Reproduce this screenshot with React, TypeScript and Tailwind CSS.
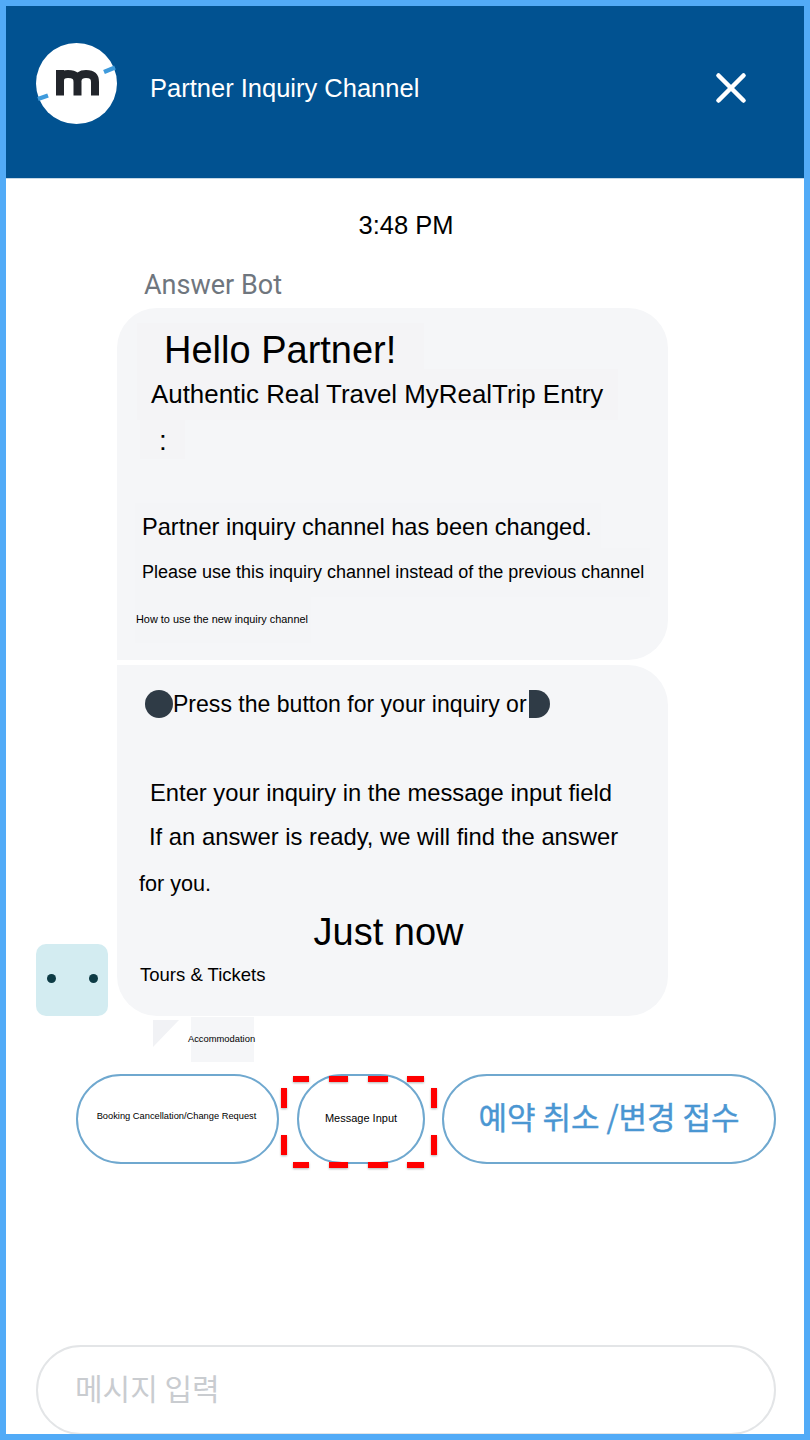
import { X } from 'lucide-react';

// dashes of the red highlight box, coordinates are local to its svg
const dashes = [
  [17, 7, 33, 7], [53, 7, 72, 7], [92, 7, 112, 7], [131, 7, 148, 7],
  [17, 93, 33, 93], [53, 93, 72, 93], [92, 93, 112, 93], [131, 93, 148, 93],
  [8, 16, 8, 36], [8, 63, 8, 83],
  [158, 16, 158, 36], [158, 63, 158, 83],
];

const Logo = () => (
  <svg width="81" height="81" viewBox="0 0 81 81" className="shrink-0">
    <circle cx="40.5" cy="40.5" r="40.5" fill="#ffffff" />
    <path d="M2 56 L12 52.5 M68 29 L79 24.5" stroke="#3f9bdc" strokeWidth="4.5" fill="none" />
    <path
      d="M24 52.5 V27 M24 38 C24 33 27 31 32 31 C38.5 31 41.5 33.5 41.5 39 V52.5 M41.5 38 C41.5 33 45 31 50 31 C56 31 59 33.5 59 39 V52.5"
      stroke="#22252b"
      strokeWidth="8"
      fill="none"
    />
  </svg>
);

const App = () => {
  return (
    <div className="w-[810px] h-[1440px] box-border border-[6px] border-[#52abf7] bg-white overflow-hidden font-['Liberation_Sans',sans-serif] text-black">
      <header className="h-[173px] bg-[#015291] border-b border-[#c5d8e6] pl-[30px] pt-[37px] pr-[48px] box-border">
        <div className="h-[90px] flex items-center">
          <div className="self-start">
            <Logo />
          </div>
          <span className="ml-[33px] text-[25.5px] text-white">Partner Inquiry Channel</span>
          <X size={50} strokeWidth={2.2} className="ml-auto text-white" />
        </div>
      </header>

      <div className="h-[93px] pl-[2px] flex items-center justify-center text-[25.5px]">3:48 PM</div>
      <div className="h-[36px] pl-[138px] pb-[10px] flex items-center font-['Roboto',sans-serif] text-[27px] text-[#6f767e]">
        Answer Bot
      </div>

      <div className="flex items-end pl-[30px] gap-[9px]">
        <div className="w-[72px] h-[72px] rounded-[10px] bg-[#d3ecf1] flex items-center justify-between px-[10.5px] pb-[4px] box-border">
          <span className="w-[9px] h-[9px] rounded-full bg-[#0d3b45]" />
          <span className="w-[9px] h-[9px] rounded-full bg-[#0d3b45]" />
        </div>

        <div className="flex flex-col gap-[5px]">
          <div className="w-[551px] h-[352px] box-border pt-[15px] rounded-t-[40px] rounded-br-[40px] bg-[#f5f6f8] flex flex-col items-start">
            <div className="ml-[20px] w-[287px] h-[46px] pl-[27px] pt-[8px] flex items-center bg-[#f4f4f6] text-[38px] whitespace-nowrap">
              Hello Partner!
            </div>
            <div className="ml-[20px] w-[481px] h-[51px] pl-[14px] flex items-center bg-[#f4f4f6] text-[25.9px] whitespace-nowrap">
              Authentic Real Travel MyRealTrip Entry
            </div>
            <div className="ml-[23px] w-[45px] h-[39px] pl-[19px] pt-[2px] flex items-center bg-[#f4f4f6] text-[28px] leading-none">:</div>
            <div className="mt-[44px] ml-[18px] w-[466px] h-[45px] pl-[7px] pt-[4px] flex items-center bg-[#f4f5f7] text-[23.6px] whitespace-nowrap">
              Partner inquiry channel has been changed.
            </div>
            <div className="ml-[18px] w-[515px] h-[49px] pl-[7px] flex items-center bg-[#f4f5f7] text-[18px] whitespace-nowrap">
              Please use this inquiry channel instead of the previous channel
            </div>
            <div className="ml-[18px] w-[176px] h-[46px] pl-px pb-[2px] flex items-center bg-[#f4f5f7] text-[10.9px] whitespace-nowrap">
              How to use the new inquiry channel
            </div>
          </div>

          <div className="w-[551px] h-[351px] box-border rounded-tr-[40px] rounded-b-[40px] bg-[#f5f6f8] flex flex-col items-start">
            <div className="mt-[25px] ml-[28px] h-[28px] flex items-center text-[23.05px] whitespace-nowrap">
              <span className="w-[28px] h-[28px] rounded-full bg-[#2f3b46]" />
              Press the button for your inquiry or
              <span className="ml-[2px] w-[21px] h-[28px] rounded-r-full bg-[#2f3b46]" />
            </div>
            <div className="mt-[61px] ml-[33px] text-[23.75px] leading-[28px] whitespace-nowrap">
              Enter your inquiry in the message input field
            </div>
            <div className="mt-[16px] ml-[32px] text-[23.8px] leading-[28px] whitespace-nowrap">
              If an answer is ready, we will find the answer
            </div>
            <div className="mt-[19px] ml-[22px] text-[21.6px] leading-[28px] whitespace-nowrap">for you.</div>
            <div className="mt-[12px] self-center pr-[8px] text-[38px] leading-[44px] whitespace-nowrap">Just now</div>
            <div className="mt-[9px] ml-[23px] text-[18.5px] leading-[24px] whitespace-nowrap">Tours &amp; Tickets</div>
          </div>
        </div>
      </div>

      <div className="mt-px h-[45px] pl-[147px] flex items-start">
        <div className="mt-[3px] w-[26px] h-[27px] bg-[#f1f2f5] [clip-path:polygon(0_0,100%_0,0_100%)]" />
        <div className="ml-[12px] w-[63px] h-[45px] bg-[#f5f6f8] flex items-center justify-center pr-[2px] text-[9.4px] whitespace-nowrap">
          Accommodation
        </div>
      </div>

      <div className="mt-[12px] pl-[70px] flex items-start">
        <button className="w-[203px] h-[90px] box-border rounded-full border-2 border-[#6fa8cf] bg-white text-[9.3px] whitespace-nowrap flex items-center justify-center pb-[4px] pr-[2px]">
          Booking Cancellation/Change Request
        </button>
        <div className="relative ml-[18px]">
          <button className="w-[128px] h-[90px] box-border rounded-full border-2 border-[#6fa8cf] bg-white text-[11px] whitespace-nowrap flex items-center justify-center pb-[2px]">
            Message Input
          </button>
          <svg width="166" height="100" className="absolute -left-[21px] -top-[2px] drop-shadow-[0_1px_1px_rgba(0,0,0,0.3)]">
            {dashes.map((d, i) => (
              <line key={i} x1={d[0]} y1={d[1]} x2={d[2]} y2={d[3]} stroke="#ff0000" strokeWidth="6" />
            ))}
          </svg>
        </div>
        <button className="ml-[17px] w-[334px] h-[90px] box-border rounded-full border-2 border-[#6fa8cf] bg-white font-['Noto_Sans_CJK_KR',sans-serif] [-webkit-text-stroke:0.4px_#4a96d2] text-[31px] text-[#4a96d2] whitespace-nowrap flex items-center justify-center pb-[6px]">
          예약 취소 /변경 접수
        </button>
      </div>

      <div className="mt-[181px] ml-[30px] w-[740px] h-[90px] box-border rounded-[45px] border-2 border-[#e3e5e7] pl-[37px] pb-[6px] flex items-center font-['Noto_Sans_CJK_KR',sans-serif] text-[30px] text-[#c9ccd0]">
        메시지 입력
      </div>
    </div>
  );
};

export default App;
